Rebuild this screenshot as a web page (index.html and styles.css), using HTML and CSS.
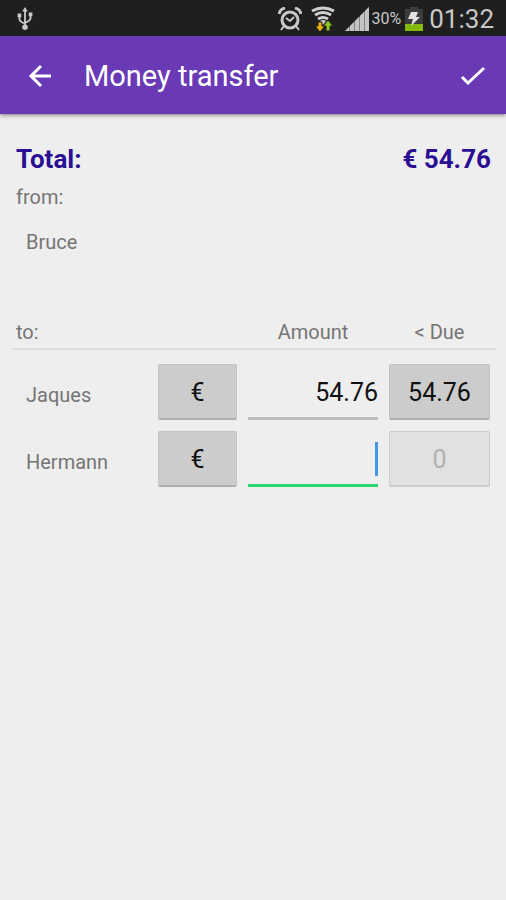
FILE: index.html
```html
<!DOCTYPE html>
<html lang="en">
<head>
    <meta charset="utf-8">
    <meta name="viewport" content="width=device-width, initial-scale=1">
    <title>Money transfer</title>
    <link rel="stylesheet" href="styles.css">
</head>
<body>
    <!-- Status bar -->
    <div class="status-bar">
        <svg class="usb" width="18" height="24" viewBox="0 0 18 26" fill="none" stroke="#c8c8c8" stroke-width="2">
            <path d="M9 4v18M3 9v4q0 3 6 5M15 8v4q0 3-6 5"/>
            <path d="M9 0l3 5H6zM1 7h4v4H1zM13 6h4v4h-4z" fill="#c8c8c8" stroke="none"/>
            <circle cx="9" cy="22" r="3" fill="#c8c8c8" stroke="none"/>
        </svg>
        <svg class="alarm" width="24" height="24" viewBox="0 0 24 24" fill="none" stroke="#c8c8c8" stroke-width="2">
            <circle cx="12" cy="13" r="8" stroke-width="3"/>
            <path d="M8 11l4 3 4-4M6 19l-3 4M18 19l3 4" stroke-width="2"/>
            <path d="M1 7q1-5 6-6M17 1q5 1 6 6" stroke-width="3"/>
        </svg>
        <svg class="wifi" width="26" height="26" viewBox="0 0 26 26" fill="none" stroke="#d0d0d0">
            <path d="M2 5q11-6 22 0M5 9q8-5 16 0M8 13q5-3 10 0" stroke-width="3"/>
            <path d="M10 15q3-2 6 0l-3 4z" fill="#d0d0d0" stroke="none"/>
            <path d="M8 16h4v4h3l-5 6-5-6h3z" fill="#e8ae12" stroke="#1f1f1f" stroke-width="1"/>
            <path d="M16 25h4v-5h3l-5-6-5 6h3z" fill="#8fc31f" stroke="#1f1f1f" stroke-width="1"/>
        </svg>
        <svg class="signal" width="24" height="24" viewBox="0 0 24 24" fill="#c4c4c4">
            <path d="M0 24l4-4v4zM5 24v-5l4-4v9zM10 24V14l4-4v14zM15 24V9l4-4v19zM20 24V4l4-4v24z"/>
            <path d="M0 24L24 0v24z" opacity=".6"/>
        </svg>
        <span class="percent">30%</span>
        <svg class="battery" width="18" height="24" viewBox="0 0 18 24">
            <path d="M5 0h8v2h5v22H0V2h5z" fill="#3c3c3c"/>
            <path d="M0 17h18v7H0z" fill="#84b80c"/>
            <path d="M6 5h7l-2 5h4L6 19l2-7H3z" fill="#e2e2e2"/>
        </svg>
        <span class="clock">01:32</span>
    </div>

    <!-- App bar -->
    <header class="app-bar">
        <button type="button" class="icon-button" aria-label="Back">
            <svg width="24" height="24" viewBox="0 0 24 24" fill="none" stroke="#fff" stroke-width="3">
                <path d="M23 12H3M13 2L3 12l10 10"/>
            </svg>
        </button>
        <h1>Money transfer</h1>
        <button type="button" class="icon-button" aria-label="Save">
            <svg width="26" height="20" viewBox="0 0 26 20" fill="none" stroke="#fff" stroke-width="3">
                <path d="M2 11l6 6L24 2"/>
            </svg>
        </button>
    </header>

    <main>
        <div class="total">
            <span>Total:</span>
            <span>€ 54.76</span>
        </div>
        <div class="label">from:</div>
        <div class="payer">Bruce</div>

        <table class="transfers">
            <thead>
                <tr>
                    <th class="name">to:</th>
                    <th class="currency"></th>
                    <th class="amount">Amount</th>
                    <th class="due">&lt; Due</th>
                </tr>
            </thead>
            <tbody>
                <tr>
                    <td class="name"><label for="jaques">Jaques</label></td>
                    <td><button type="button">€</button></td>
                    <td><div class="field"><input type="text" id="jaques" value="54.76"></div></td>
                    <td class="due"><button type="button">54.76</button></td>
                </tr>
                <tr>
                    <td class="name"><label for="hermann">Hermann</label></td>
                    <td><button type="button">€</button></td>
                    <td><div class="field active"><input type="text" id="hermann"><span class="caret"></span></div></td>
                    <td class="due"><button type="button" disabled>0</button></td>
                </tr>
            </tbody>
        </table>
    </main>
</body>
</html>
```
FILE: styles.css
```css
* {
    box-sizing: border-box;
}

body {
    margin: 0;
    min-height: 100vh;
    background: #eeeeee;
    color: #757575;
    font-family: Roboto, "Liberation Sans", sans-serif;
    font-size: 20px;
    line-height: 24px;
}

button, input {
    font-family: inherit;
    font-size: 25px;
    color: #111;
    border: none;
    border-radius: 0;
    padding: 0;
}

/* Status bar */
.status-bar {
    display: flex;
    align-items: center;
    height: 36px;
    padding: 2px 12px 0 16px;
    background: #1f1f1f;
    color: #c8c8c8;
}

.usb {
    margin-right: auto;
}

.wifi {
    margin-left: 8px;
}

.signal {
    margin-left: 9px;
}

.percent {
    margin: 0 4px 0 3px;
    font-size: 16px;
}

.clock {
    margin-left: 6px;
    font-size: 26px;
}

/* App bar */
.app-bar {
    display: flex;
    align-items: center;
    height: 78px;
    padding: 2px 13px 0 20px;
    background: #6a39b5;
    box-shadow: 0 1px 4px rgba(0, 0, 0, 0.5);
}

.app-bar h1 {
    flex: 1;
    margin: 0 0 0 24px;
    color: #fff;
    font-size: 29px;
    font-weight: 400;
    line-height: 36px;
}

.icon-button {
    display: flex;
    align-items: center;
    justify-content: center;
    width: 40px;
    height: 48px;
    background: none;
    cursor: pointer;
}

/* Content */
main {
    padding: 30px 10px 0 12px;
}

.total {
    display: flex;
    justify-content: space-between;
    padding: 0 5px 0 4px;
    color: #2a0e94;
    font-size: 26px;
    font-weight: 700;
    line-height: 30px;
}

.label {
    padding: 11px 4px 0;
}

.payer {
    padding: 21px 14px 0;
}

.transfers {
    width: 100%;
    margin-top: 66px;
    table-layout: fixed;
    border-collapse: collapse;
}

.transfers th {
    padding: 0 11px 4px 0;
    border-bottom: 2px solid #dcdcdc;
    font-weight: 400;
    text-align: center;
}

.transfers th.name {
    padding-left: 4px;
    text-align: left;
}

.transfers th.currency {
    width: 90px;
}

.transfers th.amount {
    width: 141px;
}

.transfers th.due {
    width: 107px;
    padding-right: 6px;
}

.transfers td {
    padding: 0 11px 11px 0;
}

.transfers tbody tr:first-child td {
    padding-top: 14px;
}

.transfers td.name {
    padding-bottom: 5px;
    padding-left: 14px;
}

.transfers td.due {
    padding-right: 6px;
}

.transfers button {
    display: block;
    width: 100%;
    height: 56px;
    padding-top: 2px;
    background: #cccccc;
    border: 1px solid #c4c4c4;
    border-bottom: 2px solid #aeaeae;
    border-radius: 2px;
    cursor: pointer;
}

.transfers button:disabled {
    background: #e1e1e1;
    border-color: #cccccc;
    color: #b0b0b0;
    cursor: default;
}

.field {
    position: relative;
}

.field input {
    display: block;
    width: 100%;
    height: 56px;
    padding-top: 4px;
    background: none;
    border-bottom: 3px solid #bdbdbd;
    outline: none;
    text-align: right;
}

.field.active input {
    border-bottom-color: #2bd66b;
    caret-color: transparent;
}

.caret {
    position: absolute;
    top: 11px;
    right: 0;
    width: 3px;
    height: 34px;
    background: #4595ec;
}
```
